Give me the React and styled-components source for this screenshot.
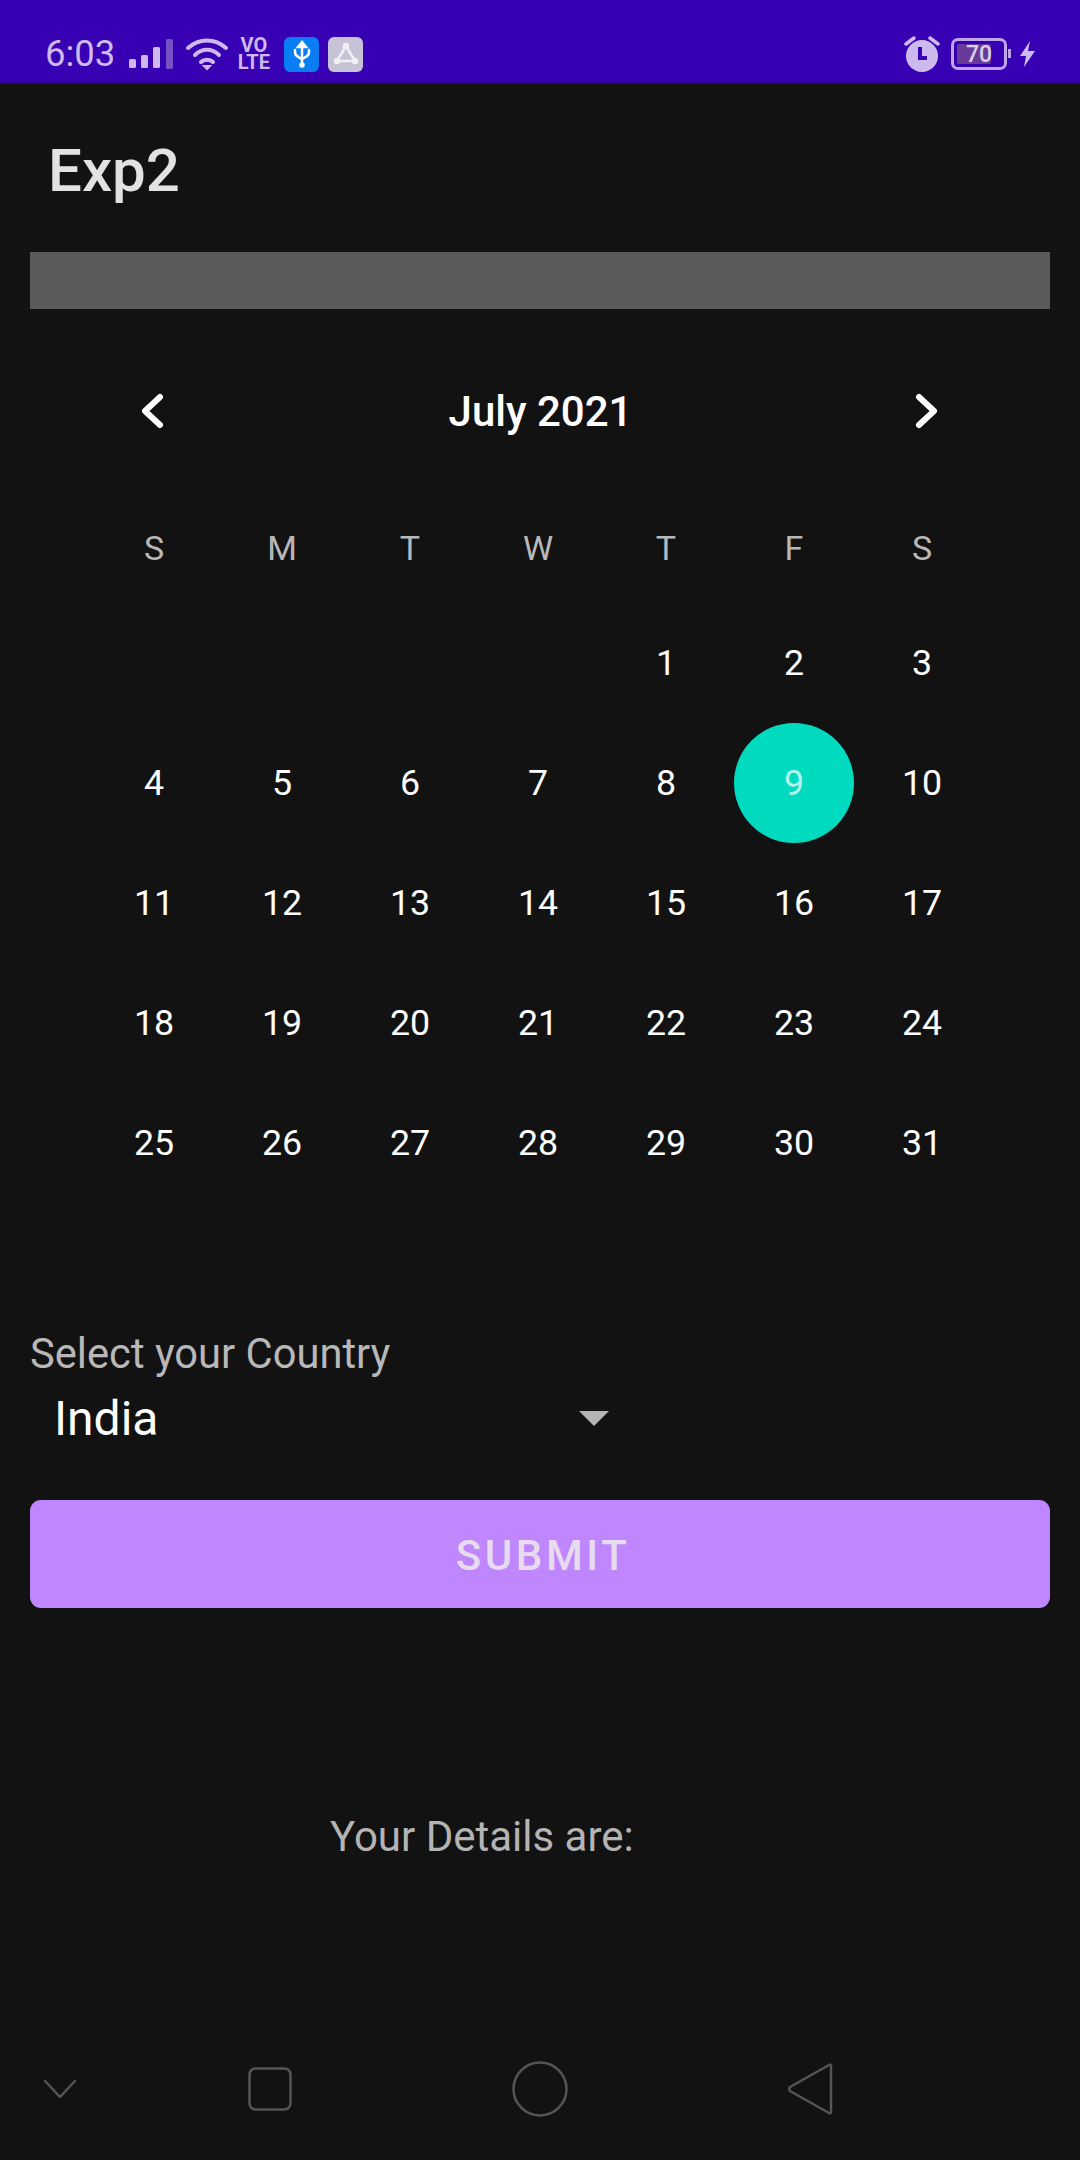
import React from 'react';
import styled, { createGlobalStyle } from 'styled-components';

const GlobalStyle = createGlobalStyle`
  html, body {
    margin: 0;
    padding: 0;
    background: #121212;
  }
  * {
    box-sizing: border-box;
  }
`;

const Screen = styled.div`
  width: 1080px;
  height: 2160px;
  display: flex;
  flex-direction: column;
  background: #121212;
  font-family: Roboto, "Liberation Sans", sans-serif;
  overflow: hidden;
`;

const StatusBar = styled.div`
  height: 84px;
  flex: none;
  display: flex;
  align-items: center;
  justify-content: space-between;
  padding: 26px 44px 0 45px;
  background: #3700b3;
  border-bottom: 2px solid #2c0090;
  color: #cdb9ee;
`;

const StatusGroup = styled.div`
  display: flex;
  align-items: center;
`;

const Clock = styled.span`
  font-size: 36.5px;
  line-height: 36px;
  margin-right: 14px;
`;

const Volte = styled.span`
  width: 33px;
  margin: 0 14px 0 8px;
  font-size: 20px;
  line-height: 17px;
  font-weight: 700;
  text-align: center;
  white-space: nowrap;
`;

const Tile = styled.span`
  width: 35px;
  height: 35px;
  display: flex;
  align-items: center;
  justify-content: center;
  margin-right: 9px;
  border-radius: 6px;
  background: ${(p) => p.$color};
`;

const Battery = styled.span`
  position: relative;
  width: 56px;
  height: 32px;
  margin: 0 12px 0 11px;
  display: flex;
  align-items: center;
  justify-content: center;
  border: 3px solid #bfa5ea;
  border-radius: 7px;
  font-size: 23px;
  font-weight: 500;
  color: #d8d0e8;

  &::before {
    content: '';
    position: absolute;
    left: 3px;
    top: 3px;
    bottom: 3px;
    width: 34px;
    border-radius: 2px;
    background: #6a3a98;
  }

  &::after {
    content: '';
    position: absolute;
    right: -7px;
    top: 8px;
    width: 3px;
    height: 9px;
    background: #bfa5ea;
  }
`;

const BatteryValue = styled.span`
  position: relative;
`;

const AppTitle = styled.h1`
  height: 153px;
  flex: none;
  display: flex;
  align-items: center;
  margin: 0;
  padding: 20px 0 0 48px;
  font-size: 60px;
  font-weight: 500;
  color: #e2e2e2;
`;

const GreyBar = styled.div`
  height: 57px;
  flex: none;
  margin: 15px 30px 0;
  background: #5a5a5a;
`;

const Calendar = styled.div`
  flex: none;
  width: 896px;
  margin: 42px 0 0 90px;
`;

const MonthRow = styled.div`
  height: 120px;
  display: flex;
  align-items: center;
  justify-content: space-between;
  padding: 0 44px 0 47px;
`;

const MonthTitle = styled.span`
  margin-left: 2px;
  font-size: 42px;
  font-weight: 500;
  color: #fff;
`;

const Arrow = styled.svg`
  width: 30px;
  height: 36px;
  fill: none;
  stroke: #fff;
  stroke-width: 6;
  stroke-linecap: round;
  stroke-linejoin: round;
`;

const Grid = styled.div`
  display: grid;
  grid-template-columns: repeat(7, 128px);
`;

const Weekdays = styled(Grid)`
  height: 60px;
  margin: 47px 0 25px;
  align-items: center;
`;

const Weekday = styled.span`
  text-align: center;
  font-size: 34px;
  color: #b8b8b8;
`;

const Days = styled(Grid)`
  grid-auto-rows: 120px;
`;

const Day = styled.span`
  display: flex;
  align-items: center;
  justify-content: center;
  font-size: 35.75px;
  color: #fff;
`;

const Selected = styled.span`
  width: 120px;
  height: 120px;
  display: flex;
  align-items: center;
  justify-content: center;
  border-radius: 50%;
  background: #00dbc0;
  color: #b5f2ea;
`;

const CountryLabel = styled.div`
  flex: none;
  margin: 125px 0 0 30px;
  font-size: 41.7px;
  line-height: 52px;
  color: #b8b8b8;
`;

const Spinner = styled.div`
  flex: none;
  width: 555px;
  height: 66px;
  margin: 5px 0 0 54px;
  display: flex;
  align-items: center;
  justify-content: space-between;
  font-size: 48px;
  color: #fff;
`;

const Caret = styled.span`
  width: 0;
  height: 0;
  border-left: 15px solid transparent;
  border-right: 15px solid transparent;
  border-top: 15px solid #b4b4b4;
`;

const SubmitButton = styled.button`
  flex: none;
  height: 108px;
  margin: 49px 30px 0;
  padding: 3px 0 0 6px;
  border: 0;
  border-radius: 11px;
  background: #c086fd;
  font-family: inherit;
  font-size: 42px;
  font-weight: 500;
  letter-spacing: 3.6px;
  color: #e6dcee;
`;

const Details = styled.div`
  flex: none;
  margin: 202px 0 0 330px;
  font-size: 42px;
  line-height: 54px;
  color: #b4b4b4;
`;

const NavBar = styled.div`
  margin-top: auto;
  height: 96px;
  flex: none;
  margin-bottom: 23px;
  display: flex;
  align-items: center;
  padding-left: 43px;
`;

const NavIcon = styled.svg`
  flex: none;
  margin-left: ${(p) => p.$gap}px;
  fill: none;
  stroke: #555;
  stroke-width: 2.5;
  stroke-linecap: round;
  stroke-linejoin: round;
`;

const WEEKDAYS = ['S', 'M', 'T', 'W', 'T', 'F', 'S'];
const DAYS = Array.from({ length: 31 }, (_, i) => i + 1);

function StatusIcons() {
  return (
    <StatusGroup>
      <Clock>6:03</Clock>
      <svg width="47" height="30" viewBox="0 0 47 30">
        <rect x="0" y="20" width="7" height="9" rx="1.5" fill="#cdb9ee" />
        <rect x="12" y="16" width="7" height="13" rx="1.5" fill="#cdb9ee" />
        <rect x="24" y="8" width="7" height="21" rx="1.5" fill="#cdb9ee" />
        <rect x="37" y="0" width="7" height="30" rx="1.5" fill="#7452c4" />
      </svg>
      <svg width="44" height="34" viewBox="0 0 44 34" style={{ marginLeft: 9 }} fill="none" stroke="#cdb9ee" strokeWidth="4" strokeLinecap="round">
        <path d="M3 11C14 1 30 1 41 11" />
        <path d="M10 18C17 11 27 11 34 18" />
        <path d="M16 25C19 22 25 22 28 25" />
        <path d="M22 32l-3-3h6z" fill="#cdb9ee" strokeWidth="2" />
      </svg>
      <Volte>VO<br />LTE</Volte>
      <Tile $color="#0a7df2">
        <svg width="22" height="28" viewBox="0 0 22 28" fill="none" stroke="#fff" strokeWidth="2.5" strokeLinecap="round">
          <path d="M11 4v22" />
          <path d="M7 7l4-5 4 5z" fill="#fff" />
          <path d="M4 10v2c0 4 3 5 7 7 4-2 7-3 7-7v-2" />
          <circle cx="11" cy="25" r="1.5" fill="#fff" />
        </svg>
      </Tile>
      <Tile $color="#c6c3d6">
        <svg width="26" height="26" viewBox="0 0 26 26" fill="#f2f0f4" stroke="#f2f0f4" strokeWidth="2.5">
          <path d="M13 5L22 20H4z" fill="none" />
          <circle cx="13" cy="5" r="2" />
          <circle cx="22" cy="20" r="2" />
          <circle cx="4" cy="20" r="2" />
        </svg>
      </Tile>
    </StatusGroup>
  );
}

function StatusRight() {
  return (
    <StatusGroup>
      <svg width="36" height="38" viewBox="0 0 36 38">
        <circle cx="18" cy="21" r="16" fill="#cdb9ee" />
        <path d="M16 12v11h7" fill="none" stroke="#3700b3" strokeWidth="4" />
        <path d="M2 9l8-6M34 9l-8-6" stroke="#cdb9ee" strokeWidth="3.5" strokeLinecap="round" />
      </svg>
      <Battery><BatteryValue>70</BatteryValue></Battery>
      <svg width="17" height="26" viewBox="0 0 17 26">
        <path d="M11 0L1 15h6l-2 11L16 10h-7z" fill="#cdb9ee" />
      </svg>
    </StatusGroup>
  );
}

function App() {
  return (
    <Screen>
      <GlobalStyle />
      <StatusBar>
        <StatusIcons />
        <StatusRight />
      </StatusBar>
      <AppTitle>Exp2</AppTitle>
      <GreyBar />
      <Calendar>
        <MonthRow>
          <Arrow viewBox="0 0 30 36"><path d="M23 4L8 18l15 14" /></Arrow>
          <MonthTitle>July 2021</MonthTitle>
          <Arrow viewBox="0 0 30 36"><path d="M7 4l15 14L7 32" /></Arrow>
        </MonthRow>
        <Weekdays>
          {WEEKDAYS.map((d, i) => <Weekday key={i}>{d}</Weekday>)}
        </Weekdays>
        <Days>
          {DAYS.map((d) => (
            <Day key={d} style={d === 1 ? { gridColumnStart: 5 } : undefined}>
              {d === 9 ? <Selected>{d}</Selected> : d}
            </Day>
          ))}
        </Days>
      </Calendar>
      <CountryLabel>Select your Country</CountryLabel>
      <Spinner>
        India
        <Caret />
      </Spinner>
      <SubmitButton>SUBMIT</SubmitButton>
      <Details>Your Details are:</Details>
      <NavBar>
        <NavIcon $gap={0} width="34" height="20" viewBox="0 0 34 20"><path d="M2 2l15 16L32 2" /></NavIcon>
        <NavIcon $gap={171} width="44" height="44" viewBox="0 0 44 44"><rect x="1.5" y="1.5" width="41" height="41" rx="6" /></NavIcon>
        <NavIcon $gap={220} width="56" height="56" viewBox="0 0 56 56"><circle cx="28" cy="28" r="26.5" /></NavIcon>
        <NavIcon $gap={219} width="46" height="54" viewBox="0 0 46 54"><path d="M42 3c1-1 2 0 2 1v46c0 1-1 2-2 1L3 29c-1-1-1-3 0-4z" /></NavIcon>
      </NavBar>
    </Screen>
  );
}

export default App;
